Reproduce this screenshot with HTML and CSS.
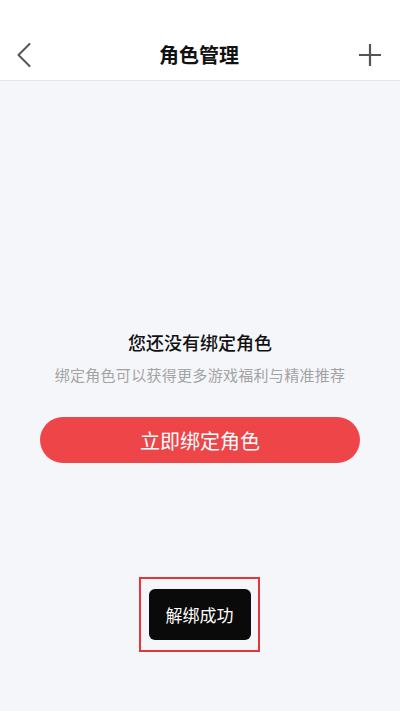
FILE: index.html
```html
<!DOCTYPE html>
<html lang="zh-CN">
<head>
<meta charset="utf-8">
<title>角色管理</title>
<link rel="stylesheet" href="styles.css">
</head>
<body>
<div class="page">
  <header class="header">
    <div class="bar">
      <span class="icon">
        <svg width="24" height="24" viewBox="0 0 24 24"><path d="M13.5 1 L2.5 12 L13.5 23" fill="none" stroke="#555" stroke-width="2" stroke-linecap="round" stroke-linejoin="round"/></svg>
      </span>
      <h1 class="title">角色管理</h1>
      <span class="icon">
        <svg width="24" height="24" viewBox="0 0 24 24"><path d="M1 12 H23 M12 1 V23" fill="none" stroke="#555" stroke-width="2.2"/></svg>
      </span>
    </div>
  </header>
  <main class="main">
    <p class="empty-title">您还没有绑定角色</p>
    <p class="empty-sub">绑定角色可以获得更多游戏福利与精准推荐</p>
    <button class="bind-btn">立即绑定角色</button>
  </main>
  <div class="toast-frame">
    <div class="toast">解绑成功</div>
  </div>
</div>
</body>
</html>
```

FILE: styles.css
```css
* { box-sizing: border-box; }
html, body { margin: 0; padding: 0; }
body {
  width: 400px;
  height: 711px;
  font-family: "Noto Sans CJK SC", "Noto Sans", sans-serif;
  background: #f5f6fa;
  overflow: hidden;
}
.page {
  position: relative;
  width: 400px;
  height: 711px;
  display: flex;
  flex-direction: column;
}
.header {
  background: #fff;
  padding-top: 30px;
  border-bottom: 1px solid #e6e6e6;
}
.bar {
  height: 50px;
  display: flex;
  align-items: center;
  justify-content: space-between;
  padding: 0 18px 0 16px;
}
.icon {
  width: 24px;
  height: 24px;
  display: flex;
}
.title {
  margin: 0;
  font-size: 20px;
  font-weight: 700;
  color: #111;
  line-height: 28px;
}
.main {
  flex: 1;
  display: flex;
  flex-direction: column;
  align-items: center;
  padding: 249px 40px 0;
}
.empty-title {
  margin: 0;
  font-size: 18px;
  line-height: 24px;
  font-weight: 500;
  color: #111;
}
.empty-sub {
  margin: 10px 0 0;
  font-size: 15px;
  line-height: 21px;
  letter-spacing: 0.3px;
  color: #a3a3a3;
}
.bind-btn {
  margin-top: 32px;
  width: 320px;
  height: 46px;
  border: none;
  border-radius: 23px;
  background: #ed4548;
  color: #fff;
  font-family: inherit;
  font-size: 20px;
  padding: 0;
}
.toast-frame {
  position: absolute;
  left: 139px;
  top: 577px;
  width: 121px;
  height: 75px;
  border: 2px solid #e53538;
  display: flex;
  align-items: center;
  justify-content: center;
}
.toast {
  width: 102px;
  height: 51px;
  border-radius: 6px;
  background: #0a0a0a;
  color: #fff;
  font-size: 17px;
  display: flex;
  align-items: center;
  justify-content: center;
}
```
